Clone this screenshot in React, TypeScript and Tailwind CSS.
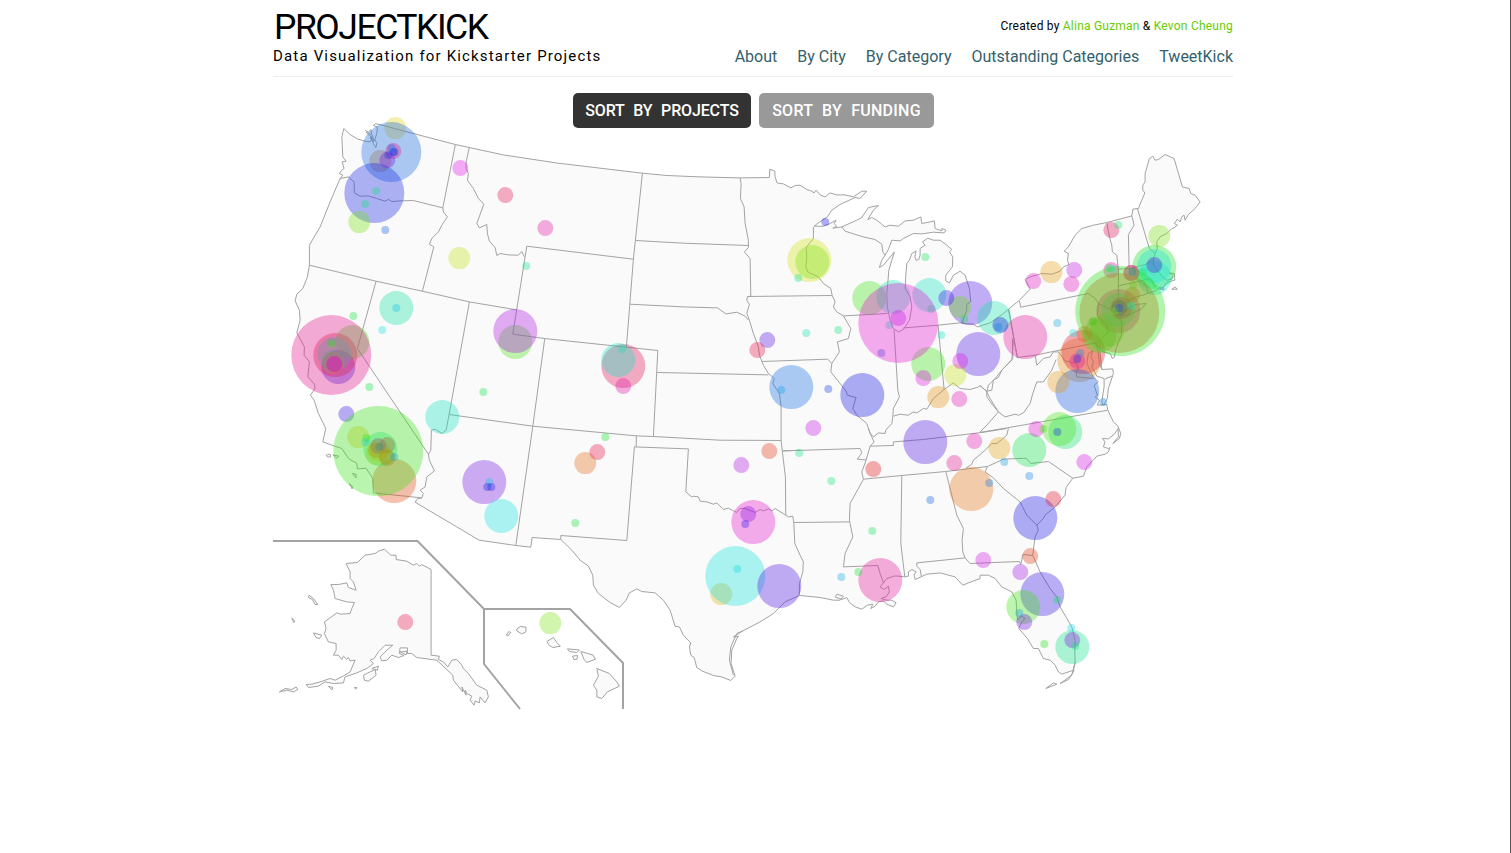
import React from "react";

/** Map coordinates are digitised in tiles at three units per pixel. */
const tile = (ox: number, oy: number, pts: string) =>
  pts
    .trim()
    .split(/\s+/)
    .map((p) => {
      const [x, y] = p.split(",").map(Number);
      return `${(ox + x / 3).toFixed(1)},${(oy + y / 3).toFixed(1)}`;
    })
    .join(" ");

const mainland = [
  tile(270, 110, "221,55 240,73 262,86 285,93 300,95 305,86 300,80 308,76 310,100 317,112 320,100 314,88 320,70 322,50 310,46 316,40 345,47 400,62 556,103 700,134 870,160"),
  tile(500, 150, "200,42 427,69 500,76 600,80 720,83 808,82 809,57 824,63"),
  tile(740, 160, "105,50 111,68 130,71 152,83 165,76 180,75 200,88 215,93 222,98 228,90 240,104 255,110 270,98 290,104 315,104 340,110 365,93 380,93 360,115 345,112 300,133 275,150 262,170 232,190 222,198 250,198 270,190 288,180 282,190 290,198 278,204 305,200 350,180 365,172 385,142 415,136 400,150 383,178 395,172 410,180 425,192 435,200 450,195 475,198 495,182 520,180 542,170 545,190 570,185 583,182 585,205 605,212 605,205 618,210 612,218 580,216 545,221 520,220 490,235 480,242 455,240 445,268 435,285 425,300 418,322 430,315 463,275 455,300 446,330 443,370 440,400 442,440 450,480 460,505 475,515 490,508 508,480 515,440 510,410 495,385 497,345 500,310 508,300 515,280 528,272 524,290 528,300 536,298 540,285 540,265 555,255 547,245 563,234 580,240 600,240 620,255 635,268 628,275 638,290 637,320 617,345 617,362 628,368 640,345 660,333 675,345 688,385 692,425 680,432 680,450 672,470 665,490 700,492 712,500 750,488 790,460"),
  tile(980, 145, "85,492 118,465 150,432 135,402 150,395 185,385 215,387 240,378 250,365 267,358 262,345 265,325 252,318 265,305 285,270 305,250 340,240 380,232 455,212 458,192 475,190 485,165 494,143 488,135 488,120 495,110 495,85 508,40 518,33 525,45 535,43 555,28 582,40 607,125 627,130 632,145 645,150 660,170 645,190 625,208 615,225 612,210 605,215 600,230 592,222 583,235 592,240 582,248 575,250 560,265 540,275 530,290 532,310 525,325 520,340 520,360 535,380 545,392 560,405 575,402 578,390 568,383 583,385 584,405 560,412 545,432 540,425 530,435 495,448 460,458 430,475 405,500 430,500 465,478 498,475 485,490 450,508 420,515"),
  tile(980, 270, "425,155 424,195 408,235 402,262 397,265 390,250 370,245 358,235 350,225 355,250 358,280 365,298 398,296 400,310 385,355 382,385 370,405 365,395 372,350 372,325 350,318 335,290 340,275 332,260 338,242 325,250 320,280 330,300 340,320 355,335 342,345 352,375 345,380 358,390 352,405 380,403 383,420 400,455 413,467 422,490 418,505 398,520 415,500 414,475 403,492 385,506 367,505 375,515 370,530 385,535 390,532"),
  tile(940, 400, "505,155 495,162 470,168 440,200 430,228 398,234 378,262 375,285 345,320 315,345 310,355 290,375 295,390 285,410 278,465 300,515 330,565 350,590 360,620 395,680 405,720 404,750 405,790 400,810 365,822 355,815 345,795 330,780 310,775 295,745 280,745 262,715 236,685 245,665 255,655 245,648 232,658 230,635 228,600 215,575 185,560 165,535 145,525 120,525 120,535 85,548 68,555 45,530 0,518"),
  tile(780, 400, "440,522 405,538 402,525 408,515 395,508 385,515 385,528 375,530 345,527 320,535 310,548 300,560 312,568 325,558 328,575 318,590 303,595 320,600 335,600 348,608 340,620 320,612 310,602 295,605 285,618 272,625 278,612 262,615 245,627 225,620 208,607 200,592 185,598 165,590 170,582 190,588 180,600 160,600 120,592 60,586"),
  tile(520, 420, "838,526 795,545 760,580 720,605 668,632 640,650 655,648 650,655 635,690 633,730 645,768 632,781 605,770 580,766 545,752 530,742 522,712 512,705 508,680 512,668 490,645 478,620 465,618 450,570 430,540 405,518 365,514 350,506 328,518 318,540 298,562 270,547 235,520 220,495 218,465 205,438 180,420 155,390 140,375 122,358 36,352 32,381"),
  tile(270, 310, "737,706 627,690 560,650 435,576 442,566 455,563 310,548 308,505 288,474 262,476 260,460 235,445 215,415 185,405 158,395 167,355 145,310 132,270 121,255 135,235 133,222 113,200 118,155 102,135 103,110 80,68 90,30 88,0"),
  tile(270, 110, "88,600 75,572 80,552 98,535 112,500 118,465 118,405 150,350 180,275 210,205 218,195 208,190 215,180 222,175 216,155 228,153 218,140 215,80"),
].join(" ");

const borders: [number, number, string[]][] = [
  [270, 110, [
    "210,205 235,200 252,215 253,248 270,258 295,257 320,265 345,273 355,268 365,274 390,272 430,271 518,293",
    "556,103 518,293 520,305 532,320 515,345 505,365 485,385 478,402 491,410 457,543",
    "598,111 588,155 588,175 595,190 592,210 610,235 625,265 641,282 620,340 628,353 650,343 652,370 658,393 675,412 680,436 690,430 715,434 745,435 755,424 763,440",
    "118,465 318,513 457,543 598,575 740,599",
    "285,60 295,66 302,58 305,72 297,76 288,66 300,70",
    "300,82 308,95 304,80 314,92",
  ]],
  [270, 310, [
    "318,-87 262,115 475,432 478,450 493,482 470,500 465,530 450,540 460,550 455,563",
    "475,432 482,420 484,360 495,357 515,370 528,360 537,313 598,-25",
    "537,313 788,348",
    "824,84 788,348 737,706",
    "168,435 180,432 182,440 172,440 168,435", "188,434 206,438 200,444 188,434", "247,490 258,492 258,503 247,490", "238,520 248,530 246,536 238,520",
  ]],
  [500, 150, [
    "400,327 80,288 38,552 133,565 473,601 460,859",
    "427,69 400,327 379,590",
    "98,828 410,857 460,859 660,870 843,871",
    "407,271 550,279 745,286",
    "390,462 550,470 652,473 678,491 710,486 735,498 745,510",
    "471,667 805,674",
    "720,83 723,100 721,145 732,170 735,220 745,270 745,292 733,305 750,325 752,438 742,440 740,450 748,463 740,490 748,510 760,550 775,590 778,615 790,645 805,670 823,685 818,700 838,730 843,770 843,871",
  ]],
  [520, 420, [
    "349,47 348,80",
    "505,86 343,80 320,361 122,346 122,358",
    "505,86 497,215 515,230 520,228 535,230 540,243 560,245 580,252 590,248 610,268 625,264 650,277 660,265 675,265 705,277 720,268 730,272 745,266 755,272 765,265 797,285 805,290 818,288 821,307 824,370 840,405 850,425 848,455 838,490 838,525",
    "783,61 790,120 796,170 797,285",
    "668,632 650,640 632,680 628,720 640,765",
    "788,92 840,90",
  ]],
  [740, 160, [
    "220,200 220,235 198,262 200,290 197,320 203,335 235,350 250,370 272,385 276,405 285,425 280,440 290,455 310,467 332,505 325,535 292,545 298,575 275,610 272,635 300,670 318,693 322,705 348,712 338,745 350,765 380,790 390,820 400,830",
    "22,409 275,406", "310,467 442,460", "65,604 263,597 275,610",
    "462,510 473,690 478,710 460,745 458,768 455,790 437,810 435,820 415,818 400,830",
    "460,768 480,762 505,765 520,755 530,758 550,745 560,747 580,715 612,688 640,668 660,685 690,688 710,682 720,677 740,693 755,690 760,660 775,652 785,630 815,600 820,540",
    "490,503 594,495 670,487", "594,495 612,688",
    "305,200 315,213 370,230 405,238 425,252 428,275 435,285",
    "806,448 832,594",
    "740,693 740,710 758,735 775,755",
  ]],
  [780, 400, [
    "265,85 275,110 282,125 270,138 258,180 245,215 250,237 235,265 210,310 208,360 218,410 195,460 190,500 293,496 300,520 310,548",
    "8,152 240,145 245,158 232,177 258,179", "42,367 207,365",
    "270,138 340,136 340,125 430,118 605,97 680,85",
    "250,237 365,226 497,214 622,199",
    "685,85 680,105 665,118 650,130 635,130 615,150 580,180 575,192 558,203",
    "365,226 362,430 374,530",
    "497,214 530,345 550,385 546,420 548,455 555,473",
    "424,528 420,508 410,498 410,488 555,473 570,490 718,484 722,493 728,463 758,466",
    "622,199 615,215 640,233 670,265 720,305 740,345 770,375",
    "622,199 670,177 738,174 752,190 805,184 878,234",
  ]],
  [980, 270, [
    "-2,487 80,473 383,420",
    "20,365 25,345 45,325 65,300 98,265 97,205",
    "0,345 20,365 30,385 55,425 75,440 105,432 115,435 130,428 150,400 158,370 170,335 190,335 215,300 228,268",
    "55,425 20,465 0,485",
    "85,117 112,262 165,255 345,218 358,235",
    "165,255 170,285 190,265 210,260 220,245 235,245 255,272 290,280 295,295 288,308 290,320 340,325",
    "358,225 365,298",
    "118,92 122,111 325,70 345,85 355,100 352,135 380,165 385,185 350,220",
    "355,100 405,125 420,150", "375,326 395,318",
  ]],
  [980, 145, [
    "380,232 388,275 395,300 397,320 410,330 415,375 415,465 420,490 405,500",
    "415,372 450,370 495,358 520,345", "455,212 462,240 445,268 447,365",
    "472,190 508,310 525,325", "415,422 490,405 500,430 505,446", "490,405 510,400 525,425",
    "575,432 585,425 592,432 575,432", "538,432 550,425 552,434 538,432",
  ]],
  [940, 400, ["405,785 395,825 360,850 385,838 403,810", "317,865 340,848 350,852 317,865"]],
];

const alaska = tile(270, 530, "343,57 362,75 378,75 378,88 410,93 430,105 440,100 448,108 455,103 483,118 483,375 508,378 505,388 520,395 533,410 545,390 560,388 575,405 580,415 595,430 620,465 650,480 655,500 645,518 630,500 628,518 615,512 612,525 600,510 605,498 590,490 585,480 588,495 575,470 578,485 550,450 548,435 500,390 440,382 425,370 412,370 412,353 390,353 388,370 402,376 385,382 365,375 350,390 335,392 330,380 350,360 368,345 345,345 325,365 312,385 300,390 310,400 290,415 260,428 225,440 220,458 190,460 165,455 145,468 115,472 108,463 125,462 150,455 180,445 195,450 220,437 240,425 255,390 240,392 235,382 230,388 220,378 215,388 205,375 190,375 198,360 198,340 175,335 163,310 168,295 163,275 200,248 212,252 240,250 245,235 253,217 230,215 195,205 190,180 182,163 205,163 230,158 235,172 258,180 250,155 240,145 240,125 228,100 262,97 285,75 315,70 325,63");

const islands = [
  "117,195 130,205 143,223 135,223 127,208 115,202", "65,264 74,272 71,277", "130,308 155,315 148,325 138,322",
  "28,485 45,475 65,478 78,470 83,478 70,485 50,480", "280,435 300,425 315,418 318,435 295,453 283,450",
  "305,415 325,408 322,420", "175,468 188,472 186,479", "253,472 260,472 257,477", "390,365 410,363 408,374",
  "709,315 716,304 722,307 714,317", "740,296 750,289 768,291 767,305 755,311 740,302",
  "830,334 850,322 860,337 871,348 848,352 838,346", "892,356 928,359 920,367 898,364", "907,378 922,376 921,387 912,388",
  "932,364 968,374 976,387 950,397 942,388", "980,415 1018,430 1040,455 1048,468 1012,485 995,505 980,500 980,480 970,465 985,438",
].map((p) => tile(270, 530, p));

/** x, y, radius, hue and, where it differs from the default, stacking layer */
const cities: number[][] = [
  [1119, 313, 40, 15], [1120, 311, 45, 115], [378, 451, 45, 110], [331, 355, 40, 325], [898, 323, 40, 305],
  [391, 152, 30, 216], [374, 193, 30, 235], [735, 576, 30, 178],
  [335, 355, 22, 350], [515, 331, 22, 285, 1], [623, 366, 22, 340], [809, 260, 22, 65], [791, 387, 22, 214],
  [862, 395, 22, 240], [970, 303, 22, 257], [978, 354, 22, 257], [1025, 337, 22, 320], [1079, 360, 22, 36], [1083, 352, 22, 352],
  [1077, 391, 22, 220], [925, 442, 22, 257], [971, 489, 22, 27], [1035, 518, 22, 241],
  [1042, 594, 22, 250], [880, 580, 22, 322], [753, 522, 22, 306], [779, 586, 22, 257], [484, 482, 22, 268],
  [394, 481, 22, 17], [1118, 311, 22, 320], [1154, 267, 22, 125],
  [352, 342, 17, 110], [334, 354, 17, 170], [338, 367, 17, 245, -1], [515, 342, 17, 105], [396, 308, 17, 162],
  [442, 417, 17, 170], [501, 516, 17, 180], [618, 360, 17, 170], [812, 262, 17, 90], [869, 298, 17, 108],
  [893, 297, 17, 165], [929, 295, 17, 170], [994, 318, 17, 163], [928, 364, 17, 108], [1029, 450, 17, 137],
  [1065, 432, 17, 145], [1059, 429, 17, 105], [1023, 607, 17, 108], [1072, 647, 17, 155], [380, 449, 17, 155],
  [1099, 336, 17, 110], [1107, 330, 17, 105], [1154, 266, 17, 178], [1154, 278, 17, 175], [1118, 310, 17, 150],
  [395, 128, 11, 54, -1], [380, 161, 11, 30, -1], [359, 222, 11, 92], [459, 258, 11, 70], [585, 463, 11, 25],
  [358, 437, 11, 52], [378, 450, 11, 45], [376, 454, 11, 52], [550, 623, 11, 90], [721, 594, 11, 45, -1],
  [960, 307, 11, 95], [955, 375, 11, 68], [938, 397, 11, 37], [999, 448, 11, 42], [1058, 382, 11, 38],
  [1051, 272, 11, 40], [1159, 236, 11, 90], [1121, 308, 11, 340], [333, 363, 11, 40],
  [460, 168, 8, 300], [505, 195, 8, 342], [545, 228, 8, 318], [393, 151, 8, 325], [387, 160, 8, 270],
  [346, 414, 8, 250], [332, 361, 11, 150], [334, 364, 8, 310, 2], [334, 364, 8, 315, 2],
  [387, 445, 8, 345], [387, 458, 8, 15], [378, 446, 8, 280], [376, 450, 8, 20], [386, 456, 8, 30],
  [597, 452, 8, 345], [623, 386, 8, 318], [767, 340, 8, 260], [757, 350, 8, 345], [813, 428, 8, 292],
  [741, 465, 8, 285], [769, 451, 8, 10], [748, 514, 8, 275], [873, 469, 8, 0], [898, 318, 8, 290, 2],
  [946, 298, 8, 250], [1000, 325, 8, 240], [960, 361, 8, 300], [923, 378, 8, 298], [959, 399, 8, 312],
  [974, 441, 8, 314], [954, 463, 8, 323], [1036, 429, 8, 305], [1084, 462, 8, 297], [1053, 499, 8, 353],
  [1030, 556, 8, 12], [983, 560, 8, 295], [1020, 572, 8, 280], [1024, 622, 8, 268], [1072, 640, 8, 275],
  [405, 622, 8, 345], [1111, 230, 8, 338], [1074, 270, 8, 292], [1071, 284, 8, 310], [1033, 281, 8, 308],
  [1111, 270, 8, 320], [1131, 273, 8, 345], [1131, 273, 8, 320], [1154, 265, 8, 255], [1132, 295, 8, 20],
  [1084, 334, 8, 20], [1077, 361, 8, 320], [1119, 308, 8, 240], [1143, 272, 4, 145],
  [376, 191, 4, 150], [365, 204, 4, 150], [385, 230, 4, 218], [393, 152, 4, 225], [394, 152, 4, 235], [391, 148, 4, 215], [388, 155, 4, 230],
  [353, 316, 4, 135], [382, 330, 4, 180], [396, 308, 4, 190], [369, 387, 4, 135], [526, 266, 4, 155],
  [483, 392, 4, 135], [331, 344, 4, 110, 2], [331, 342, 4, 150], [366, 438, 4, 115], [365, 442, 4, 185, 2], [394, 457, 4, 200, 2], [379, 447, 4, 220],
  [489, 482, 4, 190], [487, 487, 4, 235], [491, 487, 4, 235], [605, 437, 4, 125], [575, 523, 4, 130], [622, 349, 4, 165],
  [825, 222, 4, 240], [798, 278, 4, 155], [925, 257, 4, 140], [806, 333, 4, 165], [838, 330, 4, 148], [828, 389, 4, 228],
  [781, 390, 4, 200], [881, 353, 4, 220], [889, 325, 4, 165], [931, 309, 4, 155], [941, 335, 4, 172], [998, 327, 4, 210],
  [964, 319, 4, 140], [799, 453, 4, 152], [831, 481, 4, 150], [872, 531, 4, 140], [930, 500, 4, 218], [745, 524, 4, 250], [737, 569, 4, 182],
  [841, 577, 4, 197], [858, 572, 4, 130], [1004, 462, 4, 200], [1029, 476, 4, 208], [989, 483, 4, 210], [1057, 432, 4, 230], [1043, 429, 4, 105],
  [1019, 613, 4, 200], [1057, 600, 4, 145], [1071, 628, 4, 182], [1075, 646, 4, 150], [1044, 644, 4, 118],
  [1103, 402, 4, 206], [1057, 323, 4, 197], [1073, 333, 4, 180], [1118, 225, 4, 145], [1109, 268, 4, 130], [1112, 269, 4, 180], [1132, 272, 4, 225],
  [1133, 285, 4, 100], [1131, 306, 4, 165, 2], [1115, 311, 4, 95, 2], [1119, 308, 4, 225, 2], [1092, 322, 4, 110], [1093, 321, 4, 120], [1080, 353, 4, 205], [1077, 359, 4, 235],
];

/** The largest markers are translucent washes over the smaller ones around them. */
const layer = ([, , r, , z]: number[]) => z ?? (r >= 40 ? 1 : 0);
const ordered = [...cities].sort((a, b) => layer(a) - layer(b));

const nav = ["About", "By City", "By Category", "Outstanding Categories", "TweetKick"];

function UsMap() {
  return (
    <svg viewBox="273 93 960 617" className="block h-[617px] w-[960px]" fill="none" stroke="#a3a3a3" strokeLinejoin="round">
      <g transform="translate(0.1 0.2)">
        <polygon points={mainland} fill="#fafafa" />
        {borders.flatMap(([ox, oy, lines]) =>
          lines.map((l) => <polyline key={`${ox}-${oy}-${l}`} points={tile(ox, oy, l)} />),
        )}
        <polygon points={alaska} fill="#fafafa" />
        {islands.map((p) => <polygon key={p} points={p} fill="#fafafa" />)}
      </g>
      <path d="M273 541H417.500L484 609H570L623 663V709M484 609V664L520 709" strokeWidth="2" strokeLinejoin="miter" />
      <g transform="translate(0.3 0.1)" stroke="none">
        {ordered.map(([x, y, r, h], i) => (
          <circle key={i} cx={x} cy={y} r={r} fill={`hsl(${h} 78% 50%)`} fillOpacity={0.36} />
        ))}
      </g>
    </svg>
  );
}

export default function App() {
  return (
    <div className="min-h-[853px] overflow-hidden border-r border-[#555] bg-white font-['Roboto',sans-serif] text-black">
      <div className="ml-[273px] w-[960px]">
        <header className="flex h-[77px] justify-between border-b border-[#eee]">
          <div className="pt-[6px]">
            <h1 className="pl-px text-[35.5px] leading-[42px] tracking-[-1.45px] whitespace-nowrap">PROJECTKICK</h1>
            <p className="text-[15px] leading-4 tracking-[1.17px] whitespace-nowrap">Data Visualization for Kickstarter Projects</p>
          </div>
          <div className="flex flex-col items-end pt-[18px]">
            <p className="text-[12px] leading-4 tracking-[0.22px] whitespace-nowrap">
              Created by <a className="text-[#6c0]">Alina Guzman</a> &amp; <a className="text-[#6c0]">Kevon Cheung</a>
            </p>
            <nav className="mt-[13px] flex gap-5 text-[16px] leading-5 whitespace-nowrap text-[#345f6c]">
              {nav.map((n) => <a key={n}>{n}</a>)}
            </nav>
          </div>
        </header>
        <main className="grid pt-4">
          <div className="z-10 col-start-1 row-start-1 ml-[300px] flex h-[35px] gap-2 self-start text-[16px] font-medium whitespace-nowrap text-white">
            <button className="w-[178px] rounded-[5px] bg-[#333] pt-px tracking-[-0.15px] [word-spacing:5px]">SORT BY PROJECTS</button>
            <button className="w-[175px] rounded-[5px] bg-[#999] pt-px tracking-[0.25px] [word-spacing:5px]">SORT BY FUNDING</button>
          </div>
          <div className="col-start-1 row-start-1"><UsMap /></div>
        </main>
      </div>
    </div>
  );
}
